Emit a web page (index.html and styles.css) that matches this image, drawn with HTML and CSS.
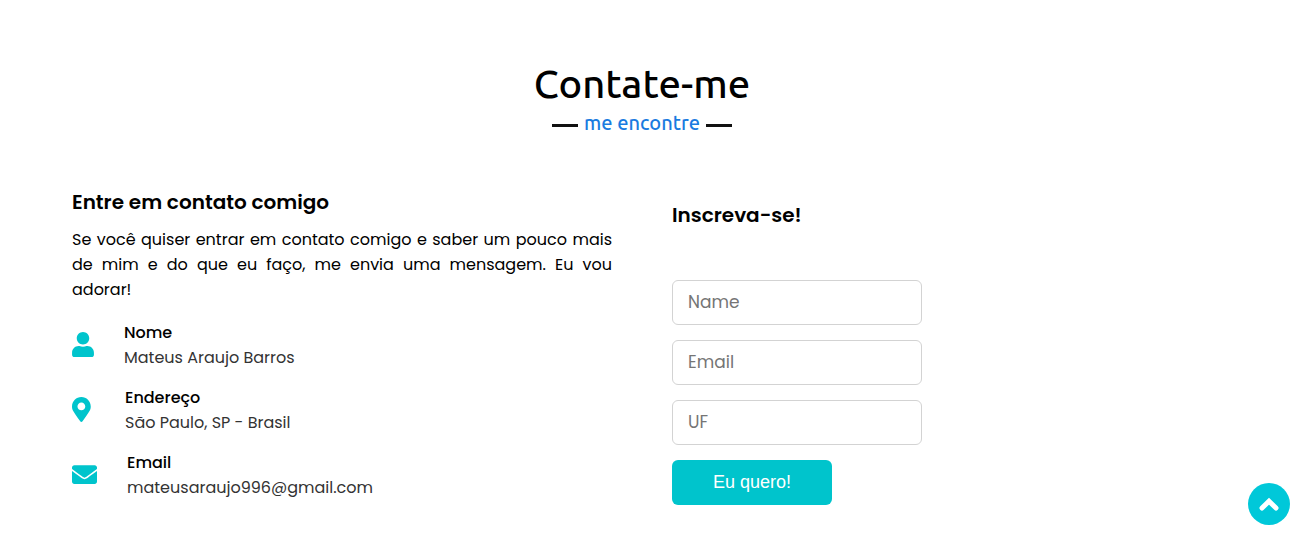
FILE: index.html
```html
<!DOCTYPE html>
<html lang="pt-BR">
<head>
<meta charset="utf-8">
<meta name="viewport" content="width=device-width, initial-scale=1">
<title>Contate-me</title>
<link rel="stylesheet" href="styles.css">
</head>
<body>
<section class="contact" id="contact">
  <header class="heading">
    <h2 class="title">Contate-me</h2>
    <p class="subtitle">me encontre</p>
  </header>
  <div class="content">
    <div class="info">
      <h3 class="column-title">Entre em contato comigo</h3>
      <p class="intro">Se você quiser entrar em contato comigo e saber um pouco mais de mim e do que eu faço, me envia uma mensagem. Eu vou adorar!</p>
      <ul class="details">
        <li class="row">
          <svg class="icon icon-user" viewBox="0 0 448 512" aria-hidden="true"><path d="M224 256c70.7 0 128-57.3 128-128S294.7 0 224 0 96 57.3 96 128s57.3 128 128 128zm89.6 32h-16.7c-22.2 10.2-46.9 16-72.9 16s-50.6-5.8-72.9-16h-16.7C60.2 288 0 348.2 0 422.4V464c0 26.5 21.5 48 48 48h352c26.5 0 48-21.5 48-48v-41.6c0-74.2-60.2-134.4-134.4-134.4z"/></svg>
          <div><div class="label">Nome</div><div class="value">Mateus Araujo Barros</div></div>
        </li>
        <li class="row">
          <svg class="icon icon-pin" viewBox="0 0 384 512" preserveAspectRatio="xMinYMid meet" aria-hidden="true"><path d="M172.3 501.7C27 291 0 269.400 0 192 0 86 86 0 192 0s192 86 192 192c0 77.400-27 99-172.300 309.700-9.500 13.800-29.900 13.800-39.400 0zM192 272c44.200 0 80-35.800 80-80s-35.800-80-80-80-80 35.800-80 80 35.800 80 80 80z"/></svg>
          <div><div class="label">Endereço</div><div class="value">São Paulo, SP - Brasil</div></div>
        </li>
        <li class="row">
          <svg class="icon icon-mail" viewBox="0 0 512 512" aria-hidden="true"><path d="M502.3 190.800c3.900-3.100 9.700-.2 9.700 4.700V400c0 26.500-21.500 48-48 48H48c-26.500 0-48-21.500-48-48V195.600c0-5 5.700-7.800 9.700-4.700 22.400 17.400 52.100 39.500 154.100 113.600 21.100 15.400 56.700 47.800 92.200 47.600 35.700.3 72-32.800 92.300-47.600 102-74.100 131.600-96.300 154-113.700zM256 320c23.200.4 56.600-29.200 73.400-41.400 132.700-96.300 142.800-104.700 173.400-128.700 5.800-4.500 9.200-11.500 9.200-18.900v-19c0-26.500-21.500-48-48-48H48c-26.500 0-48 21.500-48 48v19c0 7.400 3.400 14.300 9.200 18.900 30.600 23.900 40.700 32.400 173.400 128.700 16.800 12.200 50.200 41.800 73.400 41.400z"/></svg>
          <div><div class="label">Email</div><div class="value">mateusaraujo996@gmail.com</div></div>
        </li>
      </ul>
    </div>
    <form class="signup">
      <h3 class="column-title">Inscreva-se!</h3>
      <div class="fields">
        <input class="field" type="text" placeholder="Name" aria-label="Name">
        <input class="field" type="email" placeholder="Email" aria-label="Email">
        <input class="field" type="text" placeholder="UF" aria-label="UF">
        <button class="submit" type="submit">Eu quero!</button>
      </div>
    </form>
  </div>
</section>
<a class="to-top" href="#contact" aria-label="Voltar ao topo">
  <svg class="chevron" viewBox="0 0 20 14" aria-hidden="true"><path d="M3 11 10 4.200l7 6.800"/></svg>
</a>
</body>
</html>
```
FILE: styles.css
```css
* { box-sizing: border-box; margin: 0; padding: 0; }

body {
  background: #fff;
  color: #000;
  font-family: Poppins, Inter, sans-serif;
  font-size: 16px;
  line-height: 25px;
}

.contact { padding: 60px 95px 39px 72px; }

.heading {
  margin-bottom: 49px;
  text-align: center;
  font-family: Ubuntu, "Noto Sans", sans-serif;
  font-weight: 500;
}
.title { font-size: 40px; font-weight: 500; line-height: 48px; }
.subtitle {
  display: flex;
  justify-content: center;
  align-items: center;
  gap: 6px;
  color: #1a7be0;
  font-size: 20px;
  line-height: 30px;
}
.subtitle::before,
.subtitle::after {
  content: "";
  width: 26px;
  height: 3px;
  margin-top: 4px;
  background: #111;
}

.content { display: grid; grid-template-columns: 1fr 1fr; gap: 60px; }

.column-title { font-size: 20px; font-weight: 600; line-height: 30px; }

.intro { margin: 10px 0 18px; text-align: justify; }

.details { display: grid; gap: 15px; list-style: none; }
.row { display: flex; align-items: center; gap: 30px; }
.icon { height: 25px; margin-bottom: 1px; fill: #00c4cc; }
.icon-user { width: 22px; }
.icon-pin { width: 23px; }
.icon-mail { width: 25px; }
.label { font-weight: 500; }
.value { color: #333; }

.signup { padding-top: 13px; }
.fields {
  display: flex;
  flex-direction: column;
  align-items: flex-start;
  gap: 15px;
  margin-top: 50px;
}
.field {
  width: 250px;
  height: 45px;
  padding: 0 15px 1px;
  border: 1px solid #d3d3d3;
  border-radius: 6px;
  font-family: inherit;
  font-size: 17px;
}
.field::placeholder { color: #757575; }
.submit {
  width: 160px;
  height: 45px;
  border: 0;
  border-radius: 6px;
  background: #00c4cc;
  color: #fff;
  font-family: "Liberation Sans", Arial, sans-serif;
  font-size: 18px;
}

.to-top {
  position: fixed;
  right: 17px;
  bottom: 19px;
  display: flex;
  align-items: center;
  justify-content: center;
  width: 42px;
  height: 42px;
  border-radius: 50%;
  background: #00c8d9;
}
.chevron {
  width: 20px;
  height: 14px;
  fill: none;
  stroke: #fff;
  stroke-width: 5;
  stroke-linecap: round;
}
```
